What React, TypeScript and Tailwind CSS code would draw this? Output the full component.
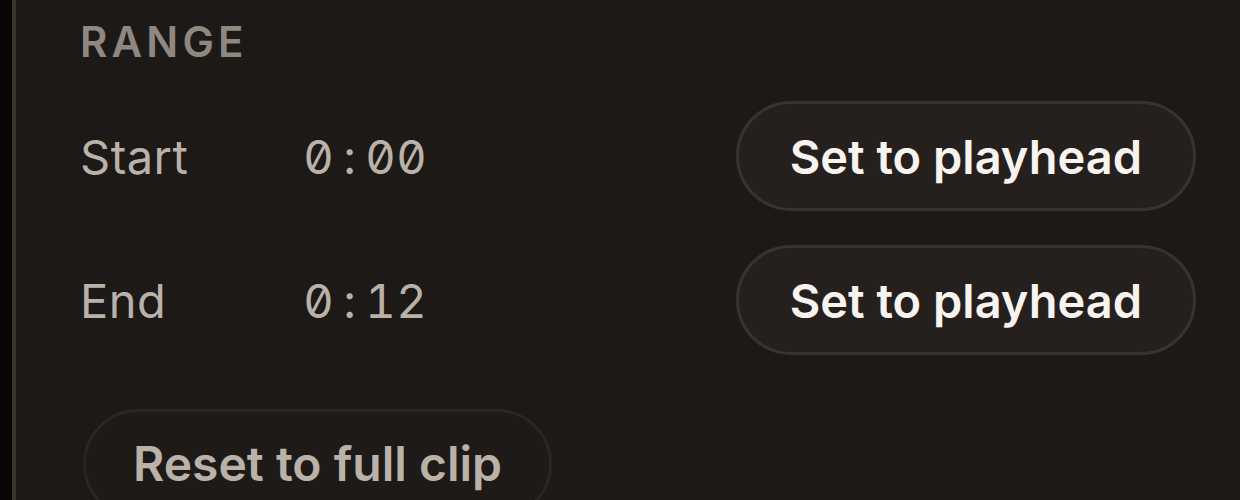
import React, { useState } from "react";

const fmt = (s: number) => `${Math.floor(s / 60)}:${String(s % 60).padStart(2, "0")}`;

// fixed-pitch cells so the Inter digits read like a mono timecode
const Timecode = ({ value }: { value: number }) => (
  <span className="flex text-[47px] font-normal leading-none slashed-zero tabular-nums text-[#bab2a8]">
    {fmt(value)
      .split("")
      .map((ch, i) => (
        <span key={i} className="inline-block w-[31px] text-center">
          {ch}
        </span>
      ))}
  </span>
);

const RangeRow = ({ label, value, onSet }: { label: string; value: number; onSet: () => void }) => (
  <div className="flex h-[110px] items-center">
    <div className="flex flex-1 items-baseline">
      <span className="w-[223px] shrink-0 text-[47px] leading-none tracking-[0.01em] text-[#bab2a8]">{label}</span>
      <Timecode value={value} />
    </div>
    <button
      onClick={onSet}
      className="h-[110px] rounded-full border-[3px] border-[#39332f] bg-[#25201d] px-[51px] text-[47px] font-semibold leading-none text-[#f7f3ee]"
    >
      Set to playhead
    </button>
  </div>
);

export default function App() {
  const [start, setStart] = useState(0);
  const [end, setEnd] = useState(12);
  const playhead = 0;

  return (
    <div className="flex h-[500px] overflow-hidden bg-[#080706] font-['Inter',sans-serif]">
      <div className="w-3 shrink-0" />
      <div className="flex-1 border-l-4 border-[#3b342d] bg-[#1c1916] pl-[64px] pr-[44px] pt-[21px]">
        <h3 className="text-[42px] font-semibold leading-none tracking-[0.1em] text-[#8e8881]">RANGE</h3>

        {/* start / end rows */}
        <div className="mt-[38px] flex flex-col gap-[34px]">
          <RangeRow label="Start" value={start} onSet={() => setStart(playhead)} />
          <RangeRow label="End" value={end} onSet={() => setEnd(playhead)} />
        </div>

        <button
          onClick={() => {
            setStart(0);
            setEnd(12);
          }}
          className="mt-[54px] ml-[3px] h-[110px] rounded-full border-[3px] border-[#2b2623] bg-[#1d1a17] px-[47px] text-[48px] font-semibold leading-none text-[#bab2a8]"
        >
          Reset to full clip
        </button>
      </div>
    </div>
  );
}
